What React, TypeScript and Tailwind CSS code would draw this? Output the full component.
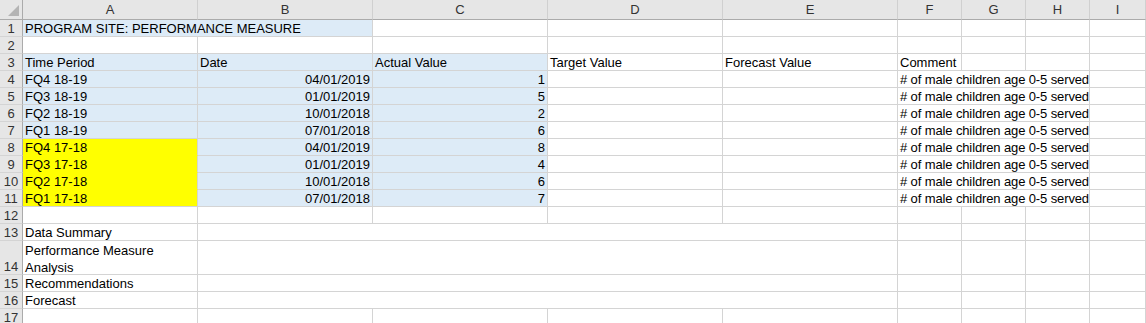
import type { ReactNode } from "react"

type CellProps = {
	children?: ReactNode
	className?: string
}

// plain worksheet cell: gridline on the right and bottom, text sits on the bottom
const Cell = ({ children, className = "" }: CellProps) => (
	<div
		className={`flex items-end overflow-visible whitespace-nowrap border-r border-b border-[#d4d4d4] px-[2px] leading-[14px] ${className}`}
	>
		{children}
	</div>
)

const RowHead = ({ n }: { n: number }) => (
	<div className="flex items-end justify-center border-r border-b border-r-[#ababab] border-b-[#d4d4d4] bg-[#e6e6e6] leading-[14px] text-[#333]">
		{n}
	</div>
)

const ColHead = ({ label }: { label: string }) => (
	<div className="flex items-center justify-center border-r border-b border-r-[#d0d0d0] border-b-[#ababab] bg-[#e6e6e6] text-[#333]">
		{label}
	</div>
)

const rows = [
	{ period: "FQ4 18-19", date: "04/01/2019", value: 1, yellow: false },
	{ period: "FQ3 18-19", date: "01/01/2019", value: 5, yellow: false },
	{ period: "FQ2 18-19", date: "10/01/2018", value: 2, yellow: false },
	{ period: "FQ1 18-19", date: "07/01/2018", value: 6, yellow: false },
	{ period: "FQ4 17-18", date: "04/01/2019", value: 8, yellow: true },
	{ period: "FQ3 17-18", date: "01/01/2019", value: 4, yellow: true },
	{ period: "FQ2 17-18", date: "10/01/2018", value: 6, yellow: true },
	{ period: "FQ1 17-18", date: "07/01/2018", value: 7, yellow: true },
]

const blue = "bg-[#ddebf7]"

const EmptyRow = ({ n }: { n: number }) => (
	<>
		<RowHead n={n} />
		{Array.from({ length: 9 }).map((_, i) => (
			<Cell key={i} />
		))}
	</>
)

const App = () => {
	return (
		<div
			className="h-[323px] w-[1146px] overflow-hidden bg-white text-[13px] text-black"
			style={{ fontFamily: '"Liberation Sans", Arial, sans-serif' }}
		>
			<div className="grid grid-cols-[23px_175px_175px_175px_175px_175px_64px_64px_64px_1fr] grid-rows-[20px_repeat(13,17px)_34px_repeat(3,17px)]">
				{/* column headers */}
				<div className="relative border-r border-b border-r-[#ababab] border-b-[#ababab] bg-[#e6e6e6]">
					<svg className="absolute left-0 top-0" width="22" height="19" viewBox="0 0 22 19">
						<polygon points="19,5 19,16 8,16" fill="#b4b4b4" />
					</svg>
				</div>
				{["A", "B", "C", "D", "E", "F", "G", "H", "I"].map((l) => (
					<ColHead key={l} label={l} />
				))}

				{/* row 1 */}
				<RowHead n={1} />
				<Cell className={`col-span-2 ${blue}`}>PROGRAM SITE: PERFORMANCE MEASURE</Cell>
				{Array.from({ length: 7 }).map((_, i) => (
					<Cell key={i} />
				))}

				<EmptyRow n={2} />

				{/* row 3 */}
				<RowHead n={3} />
				<Cell className={blue}>Time Period</Cell>
				<Cell className={blue}>Date</Cell>
				<Cell className={blue}>Actual Value</Cell>
				<Cell>Target Value</Cell>
				<Cell>Forecast Value</Cell>
				<Cell>Comment</Cell>
				<Cell />
				<Cell />
				<Cell />

				{rows.map((r, i) => (
					<div key={r.period + i} className="contents">
						<RowHead n={i + 4} />
						<Cell
							className={
								r.yellow
									? i === rows.length - 1
										? "bg-[#ffff00]"
										: "border-b-[#ffff00] bg-[#ffff00]"
									: blue
							}
						>
							{r.period}
						</Cell>
						<Cell className={`justify-end ${blue}`}>{r.date}</Cell>
						<Cell className={`justify-end ${blue}`}>{r.value}</Cell>
						<Cell />
						<Cell />
						<Cell className="col-span-3">
							<span className="relative z-10 tracking-[-0.12px]"># of male children age 0-5 served</span>
						</Cell>
						<Cell />
					</div>
				))}

				<EmptyRow n={12} />

				{[
					{ n: 13, label: <>Data Summary</> },
					{
						n: 14,
						label: (
							<span className="mb-[-1.5px] leading-[17px]">
								Performance Measure
								<br />
								Analysis
							</span>
						),
					},
					{ n: 15, label: <>Recommendations</> },
					{ n: 16, label: <>Forecast</> },
				].map((r) => (
					<div key={r.n} className="contents">
						<RowHead n={r.n} />
						<Cell>{r.label}</Cell>
						<Cell className="col-span-4" />
						<Cell />
						<Cell />
						<Cell />
						<Cell />
					</div>
				))}

				<EmptyRow n={17} />
			</div>
		</div>
	)
}

export default App
